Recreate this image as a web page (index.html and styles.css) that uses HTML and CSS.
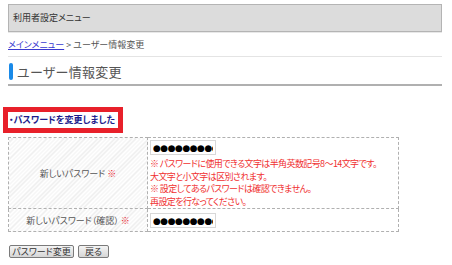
FILE: index.html
```html
<!DOCTYPE html>
<html lang="ja">
<head>
    <meta charset="UTF-8">
    <title>ユーザー情報変更</title>
    <link rel="stylesheet" href="styles.css">
</head>
<body>
    <div class="page">
        <div class="menu-bar">利用者設定メニュー</div>
        <div class="breadcrumb"><a href="#">メインメニュー</a> &gt; ユーザー情報変更</div>
        <h1 class="page-title"><span class="title-mark"></span>ユーザー情報変更</h1>

        <div class="message">・パスワードを変更しました</div>

        <table class="form-table">
            <tr class="row-first">
                <th>新しいパスワード <span class="req">※</span></th>
                <td>
                    <input type="text" class="pw-input" value="●●●●●●●●●">
                    <div class="note">
                        ※ パスワードに使用できる文字は半角英数記号8〜14文字です。<br>
                        大文字と小文字は区別されます。<br>
                        ※ 設定してあるパスワードは確認できません。<br>
                        再設定を行なってください。
                    </div>
                </td>
            </tr>
            <tr class="row-second">
                <th>新しいパスワード（確認） <span class="req">※</span></th>
                <td><input type="text" class="pw-input" value="●●●●●●●●●"></td>
            </tr>
        </table>

        <div class="actions">
            <button class="btn btn-submit">パスワード変更</button>
            <button class="btn btn-back">戻る</button>
        </div>
    </div>
</body>
</html>
```

FILE: styles.css
```css
body {
    margin: 0;
    background: #fff;
    font-family: "Noto Sans CJK JP", "Noto Sans", sans-serif;
    font-size: 9px;
    color: #444;
    font-feature-settings: "palt";
}
.page {
    width: 434px;
    padding: 4px 10px 0 8px;
}
.menu-bar {
    height: 26px;
    line-height: 26px;
    padding-left: 4px;
    background: #dcdcdc;
    border: 1px solid #b4b4b4;
    box-shadow: 0 1px 0 #e8e8e8;
    color: #333;
}
.breadcrumb {
    height: 22px;
    line-height: 22px;
    margin-top: 2px;
    border-bottom: 1px solid #e4e4e4;
    color: #555;
}
.breadcrumb a {
    color: #3a3ad0;
}
.page-title {
    display: flex;
    align-items: center;
    height: 26px;
    margin: 0;
    padding-top: 1px;
    border-bottom: 2px solid #b0b0b0;
    font-size: 13px;
    font-weight: normal;
    color: #555;
    letter-spacing: 0.3px;
}
.title-mark {
    width: 4px;
    height: 17px;
    margin: 0 4px 0 1px;
    background: #1a8ae8;
    border-radius: 2px;
}
.message {
    display: inline-block;
    margin: 21px 0 0 -5px;
    padding: 0 3px 0 1px;
    height: 16px;
    line-height: 16px;
    border: 5px solid #e8202a;
    font-weight: bold;
    color: #1c1c8c;
    white-space: nowrap;
}
.form-table {
    width: 391px;
    margin-top: 4px;
    border-collapse: collapse;
    table-layout: fixed;
}
.form-table th,
.form-table td {
    border: 1px dashed #b0b0b0;
    padding: 0;
}
.form-table th {
    width: 138px;
    font-weight: normal;
    color: #555;
    background: repeating-linear-gradient(135deg, #fff 0, #fff 2px, #ececec 2px, #ececec 3px);
}
.form-table td {
    padding: 2px 2px 0;
    vertical-align: top;
}
.row-first th,
.row-first td {
    height: 68px;
}
.row-second th,
.row-second td {
    height: 20px;
}
.req {
    color: #e8202a;
    font-weight: bold;
}
.pw-input {
    display: block;
    box-sizing: border-box;
    width: 66px;
    height: 15px;
    padding: 0 2px;
    border: 1px solid #d8d8d8;
    font-family: "DejaVu Sans", sans-serif;
    font-size: 9px;
    letter-spacing: -0.5px;
    color: #000;
}
.row-second .pw-input {
    margin-top: 2px;
}
.note {
    margin-top: 3px;
    line-height: 12.5px;
    color: #f03030;
    letter-spacing: -0.6px;
    white-space: nowrap;
}
.actions {
    display: flex;
    gap: 4px;
    margin-top: 13px;
    padding-left: 1px;
}
.btn {
    height: 13px;
    padding: 0;
    font-family: inherit;
    font-size: 9px;
    line-height: 11px;
    color: #333;
    background: linear-gradient(#f4f4f4, #d6d6d6);
    border: 1px solid #7a7a7a;
    border-radius: 2px;
    font-feature-settings: "palt";
}
.btn-submit {
    width: 65px;
}
.btn-back {
    width: 31px;
}
```
